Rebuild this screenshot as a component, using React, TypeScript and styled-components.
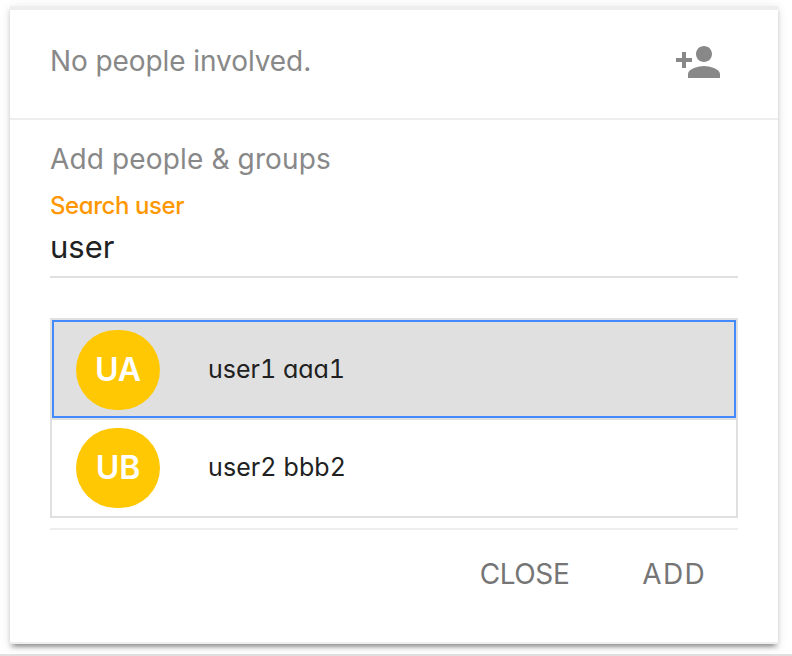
import React from 'react';
import styled, { createGlobalStyle } from 'styled-components';

const GlobalStyle = createGlobalStyle`
  * { box-sizing: border-box; }
  body {
    margin: 0;
    background: #fff;
    font-family: Inter, 'Liberation Sans', sans-serif;
    font-feature-settings: 'cv11' 1;
  }
`;

const Page = styled.main`
  height: 656px;
  padding: 6px 14px 0 10px;
  overflow: hidden;
  border-bottom: 2px solid #e0e0e0;
`;

const Card = styled.section`
  height: 638px;
  background: #fff;
  border-top: 4px solid #eee;
  border-bottom: 2px solid #eee;
  box-shadow:
    0 4px 4px rgba(0, 0, 0, 0.14),
    0 6px 4px -4px rgba(0, 0, 0, 0.28),
    0 2px 10px rgba(0, 0, 0, 0.12);
`;

const Header = styled.header`
  display: flex;
  justify-content: space-between;
  height: 110px;
  padding: 28px 56px 0 40px;
  border-bottom: 2px solid #eee;
`;

const Heading = styled.h2<{ $tracking: number }>`
  margin: 0;
  height: 44px;
  font-size: 28px;
  line-height: 46px;
  font-weight: 400;
  letter-spacing: ${(p) => p.$tracking}px;
  color: #888;
  white-space: nowrap;
`;

const IconButton = styled.button`
  width: 48px;
  height: 48px;
  padding: 0;
  border: 0;
  background: none;
  color: #888;
  svg { display: block; }
`;

const Body = styled.div`
  padding: 16px 40px 0;
`;

const Field = styled.label`
  display: flex;
  flex-direction: column;
  height: 98px;
  padding-top: 11px;
  border-bottom: 2px solid #e0e0e0;
`;

const FieldLabel = styled.span`
  height: 32px;
  line-height: 30px;
  font-size: 24px;
  font-weight: 500;
  letter-spacing: -0.42px;
  color: #ff9800;
`;

const FieldInput = styled.input`
  height: 46px;
  padding: 0;
  border: 0;
  outline: 0;
  background: none;
  font: 400 31px Inter, sans-serif;
  color: #212121;
`;

const List = styled.ul`
  margin: 40px 0 0;
  padding: 0;
  list-style: none;
  height: 200px;
  border: 2px solid #e0e0e0;
`;

const Row = styled.li<{ $selected?: boolean }>`
  display: flex;
  align-items: center;
  gap: 48px;
  height: 98px;
  padding-left: 24px;
  padding-top: ${(p) => (p.$selected ? 2 : 0)}px;
  background: ${(p) => (p.$selected ? '#e0e0e0' : '#fff')};
  outline: ${(p) => (p.$selected ? '2px solid #448aff' : 'none')};
  outline-offset: -2px;

  & + & { border-top: 2px solid #e0e0e0; }
`;

const Avatar = styled.span`
  width: 84px;
  height: 80px;
  border-radius: 40px;
  background: #ffc803;
  color: #fff;
  font-size: 32px;
  font-weight: 600;
  line-height: 80px;
  text-align: center;
`;

const UserName = styled.span<{ $tracking: number }>`
  margin-bottom: 2px;
  font-size: 25px;
  letter-spacing: ${(p) => p.$tracking}px;
  font-feature-settings: 'cv11' 1, 'tnum' 1;
  color: #212121;
`;

const Actions = styled.footer`
  display: flex;
  justify-content: flex-end;
  gap: 73px;
  margin-top: 10px;
  padding: 24px 32px 0 0;
  border-top: 2px solid #eee;
`;

const Action = styled.button<{ $tracking: number }>`
  height: 40px;
  padding: 0;
  border: 0;
  background: none;
  font: 400 28px/40px Inter, sans-serif;
  letter-spacing: ${(p) => p.$tracking}px;
  color: #757575;
`;

const users = [
  { initials: 'UA', name: 'user1 aaa1', tracking: 0 },
  { initials: 'UB', name: 'user2 bbb2', tracking: 0.1 },
];

export default function App() {
  return (
    <Page>
      <GlobalStyle />
      <Card>
        <Header>
          <Heading $tracking={-0.08}>No people involved.</Heading>
          <IconButton aria-label="Add person">
            <svg width="48" height="48" viewBox="0 0 24 24" fill="currentColor">
              <path d="M15 12c2.21 0 4-1.79 4-4s-1.79-4-4-4-4 1.79-4 4 1.79 4 4 4zm-9-2V7H4v3H1v2h3v3h2v-3h3v-2H6zm9 4c-2.67 0-8 1.34-8 4v2h16v-2c0-2.66-5.33-4-8-4z" />
            </svg>
          </IconButton>
        </Header>
        <Body>
          <Heading $tracking={0.14}>Add people &amp; groups</Heading>
          <Field>
            <FieldLabel>Search user</FieldLabel>
            <FieldInput defaultValue="user" />
          </Field>
          <List>
            {users.map((user, i) => (
              <Row key={user.name} $selected={i === 0}>
                <Avatar>{user.initials}</Avatar>
                <UserName $tracking={user.tracking}>{user.name}</UserName>
              </Row>
            ))}
          </List>
          <Actions>
            <Action $tracking={-0.4}>CLOSE</Action>
            <Action $tracking={1.3}>ADD</Action>
          </Actions>
        </Body>
      </Card>
    </Page>
  );
}
